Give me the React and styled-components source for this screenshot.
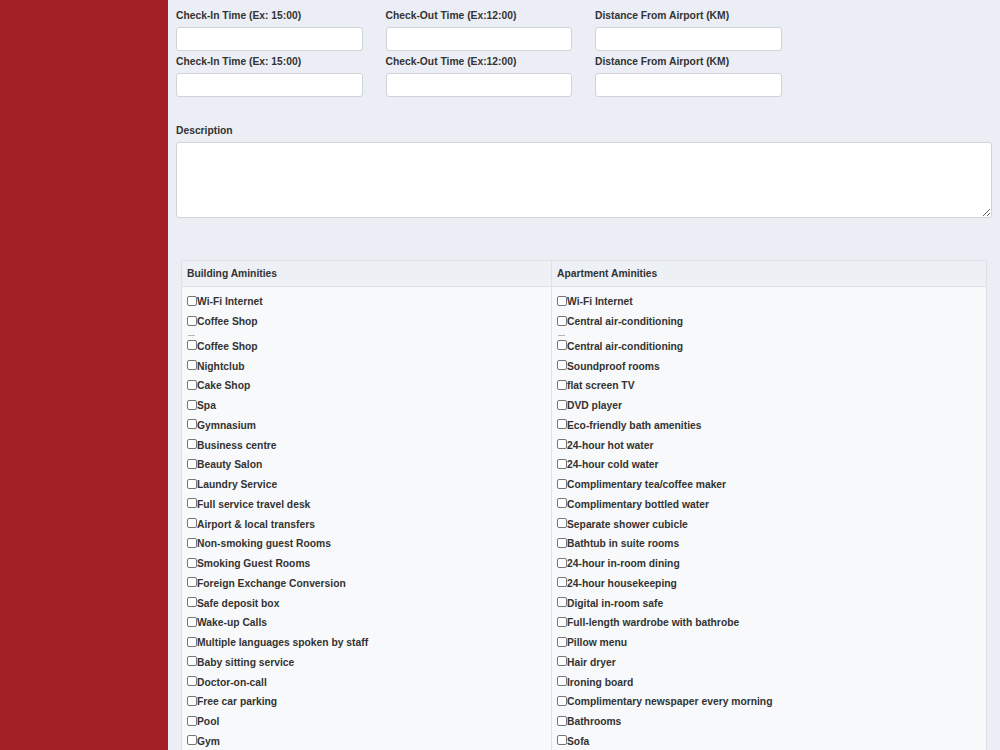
import React from "react";
import styled, { createGlobalStyle } from "styled-components";

const GlobalStyle = createGlobalStyle`
  html, body {
    margin: 0;
    padding: 0;
    overflow: hidden;
    background: #ebeef4;
    font-family: "Liberation Sans", Arial, sans-serif;
  }
`;

const Page = styled.div`
  display: flex;
  min-height: 100vh;
`;

const Sidebar = styled.aside`
  width: 168px;
  flex-shrink: 0;
  background: #a21f24;
`;

const Main = styled.main`
  flex: 1;
  padding: 8px 8px 0 8px;
  color: #333;
`;

const FieldRow = styled.div`
  display: flex;
  gap: 23px;
  margin-bottom: 3px;
`;

const Field = styled.div`
  display: flex;
  flex-direction: column;
  width: 186.5px;
`;

const Label = styled.label`
  font-size: 10.3px;
  font-weight: bold;
  line-height: 15px;
  height: 15px;
  margin-bottom: 4px;
  color: #333;
  white-space: nowrap;
`;

const Input = styled.input`
  box-sizing: border-box;
  height: 24px;
  width: 100%;
  border: 1px solid #cfd4da;
  border-radius: 3px;
  background: #fff;
  margin: 0;
`;

const DescBlock = styled.div`
  display: flex;
  flex-direction: column;
  margin-top: 26px;
`;

const TextArea = styled.textarea`
  box-sizing: border-box;
  width: 100%;
  height: 76px;
  border: 1px solid #cfd4da;
  border-radius: 3px;
  background: #fff;
  margin: 0;
`;

const Table = styled.div`
  margin: 42px 5px 0 5px;
  border: 1px solid #dde2e8;
  display: grid;
  grid-template-columns: 369px 1fr;
  background: #f8f9fa;
`;

const HeadCell = styled.div`
  height: 26px;
  box-sizing: border-box;
  padding: 0 5px;
  display: flex;
  align-items: center;
  background: #edf0f5;
  border-bottom: 1px solid #dde2e8;
  border-left: ${(p) => (p.$first ? "none" : "1px solid #dde2e8")};
  font-size: 10.3px;
  font-weight: bold;
  color: #333;
`;

const BodyCell = styled.div`
  padding: 5px 5px 0 5px;
  border-left: ${(p) => (p.$first ? "none" : "1px solid #dde2e8")};
`;

const Item = styled.label`
  display: flex;
  align-items: center;
  height: 19.75px;
  font-size: 10.3px;
  font-weight: bold;
  color: #333;
  white-space: nowrap;
`;

const Box = styled.input.attrs({ type: "checkbox" })`
  appearance: none;
  box-sizing: border-box;
  width: 10px;
  height: 10px;
  margin: -2px 0 0 0;
  border: 1px solid #767676;
  border-radius: 2px;
  background: #fff;
`;

const Clip = styled.div`
  height: 5px;
  position: relative;
  &::after {
    content: "";
    position: absolute;
    left: 1px;
    bottom: 1px;
    width: 7px;
    height: 1px;
    background: #b5b5b5;
  }
`;

const building = [
  "Wi-Fi Internet",
  "Coffee Shop",
  null,
  "Coffee Shop",
  "Nightclub",
  "Cake Shop",
  "Spa",
  "Gymnasium",
  "Business centre",
  "Beauty Salon",
  "Laundry Service",
  "Full service travel desk",
  "Airport & local transfers",
  "Non-smoking guest Rooms",
  "Smoking Guest Rooms",
  "Foreign Exchange Conversion",
  "Safe deposit box",
  "Wake-up Calls",
  "Multiple languages spoken by staff",
  "Baby sitting service",
  "Doctor-on-call",
  "Free car parking",
  "Pool",
  "Gym",
];

const apartment = [
  "Wi-Fi Internet",
  "Central air-conditioning",
  null,
  "Central air-conditioning",
  "Soundproof rooms",
  "flat screen TV",
  "DVD player",
  "Eco-friendly bath amenities",
  "24-hour hot water",
  "24-hour cold water",
  "Complimentary tea/coffee maker",
  "Complimentary bottled water",
  "Separate shower cubicle",
  "Bathtub in suite rooms",
  "24-hour in-room dining",
  "24-hour housekeeping",
  "Digital in-room safe",
  "Full-length wardrobe with bathrobe",
  "Pillow menu",
  "Hair dryer",
  "Ironing board",
  "Complimentary newspaper every morning",
  "Bathrooms",
  "Sofa",
];

const TimeRow = () => (
  <FieldRow>
    <Field>
      <Label>Check-In Time (Ex: 15:00)</Label>
      <Input />
    </Field>
    <Field>
      <Label>Check-Out Time (Ex:12:00)</Label>
      <Input />
    </Field>
    <Field>
      <Label>Distance From Airport (KM)</Label>
      <Input />
    </Field>
  </FieldRow>
);

const AmenityList = ({ items }) =>
  items.map((name, i) =>
    name === null ? (
      <Clip key={i} />
    ) : (
      <Item key={i}>
        <Box />
        {name}
      </Item>
    )
  );

export default function App() {
  return (
    <Page>
      <GlobalStyle />
      <Sidebar />
      <Main>
        <TimeRow />
        <TimeRow />

        <DescBlock>
          <Label>Description</Label>
          <TextArea />
        </DescBlock>

        <Table>
          <HeadCell $first>Building Aminities</HeadCell>
          <HeadCell>Apartment Aminities</HeadCell>
          <BodyCell $first>
            <AmenityList items={building} />
          </BodyCell>
          <BodyCell>
            <AmenityList items={apartment} />
          </BodyCell>
        </Table>
      </Main>
    </Page>
  );
}
